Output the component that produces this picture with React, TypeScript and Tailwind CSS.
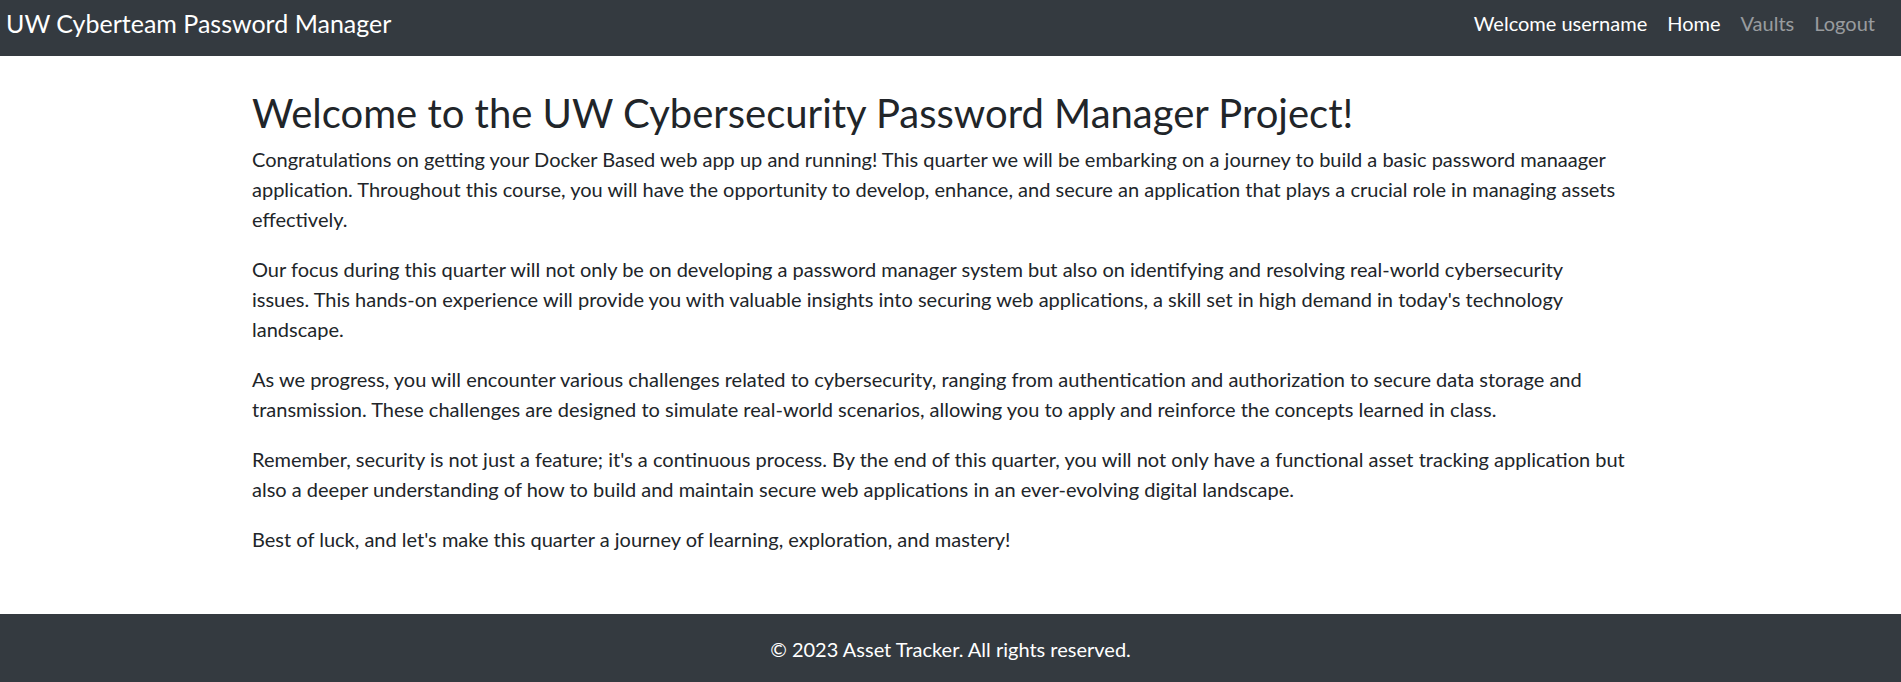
const paragraphs: string[][] = [
  [
    "Congratulations on getting your Docker Based web app up and running! This quarter we will be embarking on a journey to build a basic password manaager",
    "application. Throughout this course, you will have the opportunity to develop, enhance, and secure an application that plays a crucial role in managing assets",
    "effectively.",
  ],
  [
    "Our focus during this quarter will not only be on developing a password manager system but also on identifying and resolving real-world cybersecurity",
    "issues. This hands-on experience will provide you with valuable insights into securing web applications, a skill set in high demand in today's technology",
    "landscape.",
  ],
  [
    "As we progress, you will encounter various challenges related to cybersecurity, ranging from authentication and authorization to secure data storage and",
    "transmission. These challenges are designed to simulate real-world scenarios, allowing you to apply and reinforce the concepts learned in class.",
  ],
  [
    "Remember, security is not just a feature; it's a continuous process. By the end of this quarter, you will not only have a functional asset tracking application but",
    "also a deeper understanding of how to build and maintain secure web applications in an ever-evolving digital landscape.",
  ],
  ["Best of luck, and let's make this quarter a journey of learning, exploration, and mastery!"],
]

export default function App() {
  return (
    <div className="min-h-screen bg-white font-['Lato','Open_Sans',sans-serif] text-[#212529]">
      <nav className="flex h-[56px] items-start justify-between bg-[#343a40] pl-[6px] pr-[16px] pt-[8px]">
        <a className="text-[25px] leading-[30px] text-white">UW Cyberteam Password Manager</a>
        <div className="flex items-center text-[20px] leading-[30px]">
          <span className="px-[10px] text-white">Welcome username</span>
          <a className="px-[10px] text-white">Home</a>
          <a className="px-[10px] text-white/50">Vaults</a>
          <a className="px-[10px] text-white/50">Logout</a>
        </div>
      </nav>

      <main className="mx-auto w-[1397px] pt-[33px] pb-[40px]">
        <h1 className="mb-[7px] text-[40px] leading-[48px] font-normal">
          Welcome to the UW Cybersecurity Password Manager Project!
        </h1>
        {paragraphs.map((lines, i) => (
          <p key={i} className="mb-[20px] text-[20px] leading-[30px] whitespace-nowrap">
            {lines.map((line, j) => (
              <span key={j}>
                {line}
                {j < lines.length - 1 && <br />}
              </span>
            ))}
          </p>
        ))}
      </main>

      <footer className="bg-[#343a40] py-[20px] text-center text-[20px] leading-[30px] text-white">
        © 2023 Asset Tracker. All rights reserved.
      </footer>
    </div>
  )
}
